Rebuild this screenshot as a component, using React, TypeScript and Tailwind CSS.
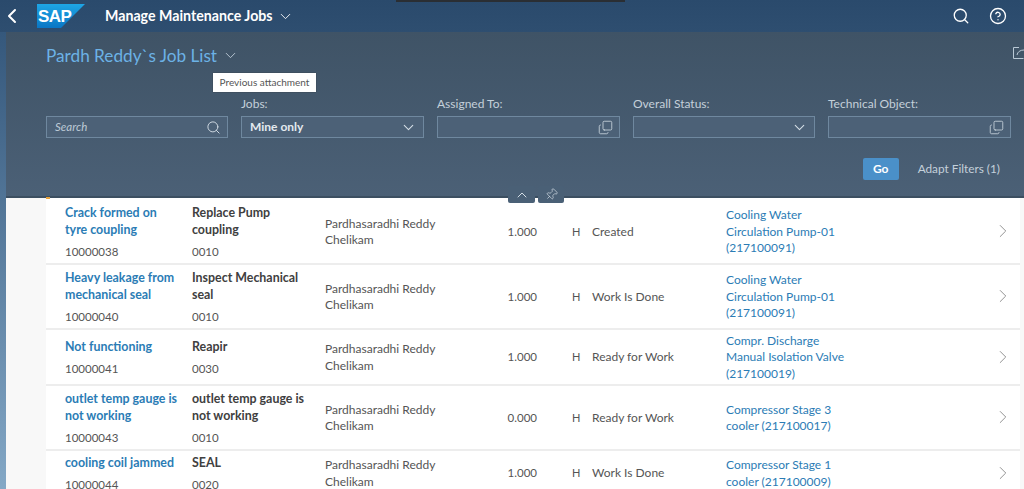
import { ChevronDown, ChevronLeft, ChevronRight, ChevronUp, CircleHelp, Copy, Pin, Search } from "lucide-react";

type Job = {
  title: string[];
  num: string;
  task: string[];
  op: string;
  qty: string;
  status: string;
  object: string[];
  height: string;
};

const jobs: Job[] = [
  {
    title: ["Crack formed on", "tyre coupling"],
    num: "10000038",
    task: ["Replace Pump", "coupling"],
    op: "0010",
    qty: "1.000",
    status: "Created",
    object: ["Cooling Water", "Circulation Pump-01", "(217100091)"],
    height: "h-[67px] pt-[3px]",
  },
  {
    title: ["Heavy leakage from", "mechanical seal"],
    num: "10000040",
    task: ["Inspect Mechanical", "seal"],
    op: "0010",
    qty: "1.000",
    status: "Work Is Done",
    object: ["Cooling Water", "Circulation Pump-01", "(217100091)"],
    height: "h-[65px] pt-[1px]",
  },
  {
    title: ["Not functioning"],
    num: "10000041",
    task: ["Reapir"],
    op: "0030",
    qty: "1.000",
    status: "Ready for Work",
    object: ["Compr. Discharge", "Manual Isolation Valve", "(217100019)"],
    height: "h-[56px] pt-[1px]",
  },
  {
    title: ["outlet temp gauge is", "not working"],
    num: "10000043",
    task: ["outlet temp gauge is", "not working"],
    op: "0010",
    qty: "0.000",
    status: "Ready for Work",
    object: ["Compressor Stage 3", "cooler (217100017)"],
    height: "h-[65px] pt-[1px]",
  },
  {
    title: ["cooling coil jammed"],
    num: "10000044",
    task: ["SEAL"],
    op: "0020",
    qty: "1.000",
    status: "Work Is Done",
    object: ["Compressor Stage 1", "cooler (217100009)"],
    height: "h-[46px] pt-[1px]",
  },
];

function SapLogo() {
  return (
    <svg width="48" height="24" viewBox="0 0 48 24" className="shrink-0">
      <defs>
        <linearGradient id="sapFill" x1="0" y1="0" x2="0" y2="1">
          <stop offset="0" stopColor="#1ea6e6" />
          <stop offset="1" stopColor="#0a76c4" />
        </linearGradient>
      </defs>
      <polygon points="0,0 48,0 24,24 0,24" fill="url(#sapFill)" />
      <text x="1" y="18" fill="#fff" fontFamily="Liberation Sans" fontSize="17" fontWeight="700" letterSpacing="-0.6">
        SAP
      </text>
    </svg>
  );
}

function FilterField({ label, children }: { label: string; children: React.ReactNode }) {
  return (
    <div className="flex flex-col">
      <label className="h-[18px] -translate-y-[3px] text-[12px] leading-[18px] text-[#c4d0da]">{label}</label>
      <div className="flex h-[22px] items-center justify-between border border-[#6f889f] bg-[#4c6177] pl-2 pr-[6px]">
        {children}
      </div>
    </div>
  );
}

function JobRow({ job }: { job: Job }) {
  return (
    <div
      className={`grid ${job.height} grid-cols-[127px_133px_165px_47px_35px_20px_134px_1fr_28px] items-center border-b-2 border-[#ededed] bg-white pl-[19px] text-[12px] leading-[16.5px] text-[#555555]`}
    >
      <div className="flex flex-col">
        {job.title.map((t) => (
          <span key={t} className="whitespace-nowrap text-[12.4px] leading-[17px] font-bold text-[#2b7cb5]">
            {t}
          </span>
        ))}
        <span className="mt-[5px] text-[11.5px] leading-[17px]">{job.num}</span>
      </div>
      <div className="flex flex-col">
        {job.task.map((t) => (
          <span key={t} className="whitespace-nowrap text-[12.4px] leading-[17px] font-bold text-[#404040]">
            {t}
          </span>
        ))}
        <span className="mt-[5px] text-[11.5px] leading-[17px]">{job.op}</span>
      </div>
      <div>
        Pardhasaradhi Reddy
        <br />
        Chelikam
      </div>
      <div className="text-right text-[11.5px]">{job.qty}</div>
      <div />
      <div className="text-[11px]">H</div>
      <div>{job.status}</div>
      <div className="text-[#2b7cb5]">
        {job.object.map((o) => (
          <div key={o} className="whitespace-nowrap">
            {o}
          </div>
        ))}
      </div>
      <ChevronRight size={22} strokeWidth={1} className="-translate-y-[1px] text-[#8a8a8a]" />
    </div>
  );
}

export default function App() {
  return (
    <div className="relative flex h-[489px] w-[1024px] flex-col overflow-hidden bg-[#f8f8f8] font-['Lato','Open_Sans',sans-serif]">
      <header className="relative flex h-[32px] shrink-0 items-center bg-gradient-to-b from-[#2a4a6c] to-[#2e4e70] text-white">
        <ChevronLeft size={24} strokeWidth={2} className="shrink-0" />
        <div className="ml-[13px]">
          <SapLogo />
        </div>
        <span className="ml-5 text-[14.2px] font-bold">Manage Maintenance Jobs</span>
        <ChevronDown size={17} strokeWidth={1.25} className="ml-[4px]" />
        <div className="ml-auto flex items-center gap-[19px] pr-[17px]">
          <Search size={18} strokeWidth={1.75} />
          <CircleHelp size={18} strokeWidth={1.75} />
        </div>
        <div className="absolute left-[396px] top-0 h-[2px] w-[229px] bg-[#2a2e33]" />
      </header>

      <div className="flex min-h-0 flex-1">
        <div className="w-[6px] shrink-0 bg-gradient-to-b from-[#35587c] to-[#84a8c6]" />
        <div className="flex min-w-0 flex-1 flex-col">
          <section className="relative h-[166px] shrink-0 border-b-2 border-[#3c4f61] bg-gradient-to-b from-[#3f5366] to-[#4b6076] pl-[40px] pr-[13px]">
            <div className="flex h-[48px] items-center pb-[1px] text-[#6cb2e6]">
              <h1 className="text-[17.2px] font-normal">Pardh Reddy`s Job List</h1>
              <ChevronDown size={17} strokeWidth={1.25} className="ml-[5px] text-[#c3d0dc]" />
            </div>
            <div className="mt-[18px] grid grid-cols-[182px_183px_183px_182px_183px] gap-x-[13px]">
              <div className="flex flex-col">
                <div className="h-[18px]" />
                <div className="flex h-[22px] items-center justify-between border border-[#6f889f] bg-[#4c6177] pl-2 pr-[6px]">
                  <span className="text-[11.5px] italic text-[#bccad6]">Search</span>
                  <Search size={15} strokeWidth={1.5} className="text-[#d4dee6]" />
                </div>
              </div>
              <FilterField label="Jobs:">
                <span className="text-[12px] font-bold text-[#e4eaef]">Mine only</span>
                <ChevronDown size={17} strokeWidth={1.5} className="text-[#d4dee6]" />
              </FilterField>
              <FilterField label="Assigned To:">
                <span />
                <Copy size={15} strokeWidth={1.25} className="-scale-y-100 text-[#d4dee6]" />
              </FilterField>
              <FilterField label="Overall Status:">
                <span />
                <ChevronDown size={17} strokeWidth={1.5} className="text-[#d4dee6]" />
              </FilterField>
              <FilterField label="Technical Object:">
                <span />
                <Copy size={15} strokeWidth={1.25} className="-scale-y-100 text-[#d4dee6]" />
              </FilterField>
            </div>
            <div className="mt-[20px] flex items-center justify-end pr-[11px]">
              <button className="h-[22px] w-[36px] rounded-[2px] bg-[#4a90c9] text-[12px] font-bold text-white">Go</button>
              <span className="ml-[19px] text-[11.8px] text-[#c4d0da]">Adapt Filters (1)</span>
            </div>
            <svg width="11" height="14" viewBox="0 0 11 14" className="absolute right-0 top-[14px] text-[#b9c8d5]" fill="none" stroke="currentColor">
              <path d="M6 1.5H.5v11h10" />
              <path d="M4 9c.5-3 3-5 7-5" />
            </svg>
          </section>

          <div className="min-h-0 flex-1 pl-[40px] pr-[4px]">
            {jobs.map((job) => (
              <JobRow key={job.num} job={job} />
            ))}
          </div>
        </div>
      </div>

      <div className="absolute left-[46px] top-[197px] h-[2px] w-[4px] bg-[#e8a33d]" />
      <div className="absolute left-[508px] top-[186px] flex gap-[3px]">
        <div className="flex h-[17px] w-[27px] items-center justify-center rounded-[2px] bg-[#4a6076] text-[#d4dee6]">
          <ChevronUp size={16} strokeWidth={1.5} />
        </div>
        <div className="flex h-[17px] w-[26px] items-center justify-center rounded-[2px] bg-[#4a6076] text-[#d4dee6]">
          <Pin size={13} strokeWidth={1.25} className="rotate-45" />
        </div>
      </div>
      <div className="absolute left-[213px] top-[73px] flex h-[19px] w-[103px] items-center justify-center bg-white text-[10px] text-[#555] shadow-[0_0_1px_#333]">
        Previous attachment
      </div>
    </div>
  );
}
